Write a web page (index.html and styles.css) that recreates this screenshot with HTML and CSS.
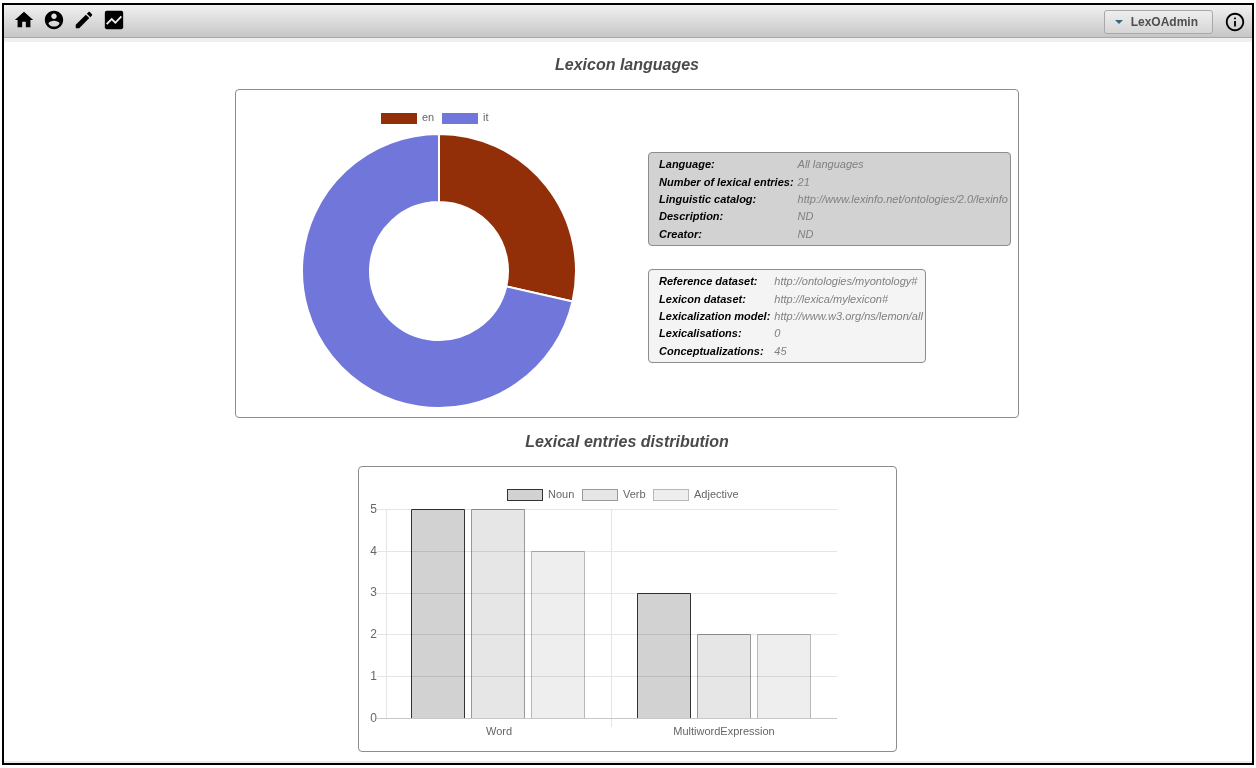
FILE: index.html
```html
<!DOCTYPE html>
<html lang="en">
<head>
<meta charset="utf-8">
<title>LexO statistics</title>
<link rel="stylesheet" href="styles.css">
</head>
<body>
<div class="frame">
  <header class="toolbar">
    <nav class="tools" aria-label="Main">
      <button class="tool" type="button" aria-label="Home"><svg viewBox="0 0 24 24"><path d="M10 20v-6h4v6h5v-8h3L12 3 2 12h3v8z"/></svg></button>
      <button class="tool" type="button" aria-label="Account"><svg viewBox="0 0 24 24"><path d="M12 2C6.480 2 2 6.480 2 12s4.480 10 10 10 10-4.480 10-10S17.520 2 12 2zm0 3c1.660 0 3 1.340 3 3s-1.340 3-3 3-3-1.340-3-3 1.340-3 3-3zm0 14.200c-2.500 0-4.710-1.280-6-3.220.030-1.990 4-3.080 6-3.080 1.990 0 5.970 1.090 6 3.080-1.290 1.940-3.500 3.220-6 3.220z"/></svg></button>
      <button class="tool" type="button" aria-label="Edit"><svg viewBox="0 0 24 24"><path d="M3 17.250V21h3.750L17.810 9.940l-3.750-3.750L3 17.250zM20.710 7.040c.390-.390.390-1.020 0-1.410l-2.340-2.340c-.390-.390-1.020-.390-1.410 0l-1.830 1.830 3.750 3.750 1.830-1.830z"/></svg></button>
      <button class="tool" type="button" aria-label="Statistics"><svg viewBox="0 0 24 24"><path d="M4 2h16a2 2 0 0 1 2 2v16a2 2 0 0 1-2 2H4a2 2 0 0 1-2-2V4a2 2 0 0 1 2-2z"/><path class="trend" d="M4 16.500l5.500-5.500 4 4L20 8"/></svg></button>
    </nav>
    <div class="account">
      <button class="user" type="button"><svg class="caret" viewBox="0 0 8 4"><path d="M0 0h8L4 4z"/></svg>LexOAdmin</button>
      <button class="tool" type="button" aria-label="Information"><svg viewBox="0 0 24 24"><path d="M11 7h2v2h-2zm0 4h2v6h-2zm1-9C6.480 2 2 6.480 2 12s4.480 10 10 10 10-4.480 10-10S17.520 2 12 2zm0 18c-4.410 0-8-3.590-8-8s3.590-8 8-8 8 3.590 8 8-3.590 8-8 8z"/></svg></button>
    </div>
  </header>
  <main class="content">
    <h2 class="title">Lexicon languages</h2>
    <section class="panel languages">
      <svg class="donut" width="412" height="327" viewBox="0 0 412 327" role="img" aria-label="Entries by language">
        <rect class="en" x="145" y="23" width="36" height="11"/>
        <text x="186" y="31">en</text>
        <rect class="it" x="206" y="23" width="36" height="11"/>
        <text x="247" y="31">it</text>
        <g class="slices">
          <path class="en" d="M203 44A137 137 0 0 1 336.560 211.480L270.270 196.360A69 69 0 0 0 203 112z"/>
          <path class="it" d="M336.560 211.480A137 137 0 1 1 203 44V112A69 69 0 1 0 270.270 196.360z"/>
        </g>
      </svg>
      <div class="details">
        <table class="info shaded">
          <tr><th scope="row">Language:</th><td>All languages</td></tr>
          <tr><th scope="row">Number of lexical entries:</th><td>21</td></tr>
          <tr><th scope="row">Linguistic catalog:</th><td>http://www.lexinfo.net/ontologies/2.0/lexinfo</td></tr>
          <tr><th scope="row">Description:</th><td>ND</td></tr>
          <tr><th scope="row">Creator:</th><td>ND</td></tr>
        </table>
        <table class="info">
          <tr><th scope="row">Reference dataset:</th><td>http://ontologies/myontology#</td></tr>
          <tr><th scope="row">Lexicon dataset:</th><td>http://lexica/mylexicon#</td></tr>
          <tr><th scope="row">Lexicalization model:</th><td>http://www.w3.org/ns/lemon/all</td></tr>
          <tr><th scope="row">Lexicalisations:</th><td>0</td></tr>
          <tr><th scope="row">Conceptualizations:</th><td>45</td></tr>
        </table>
      </div>
    </section>
    <h2 class="title">Lexical entries distribution</h2>
    <section class="panel">
      <svg class="bars" width="537" height="284" viewBox="0 0 537 284" role="img" aria-label="Lexical entries distribution">
        <rect class="noun" x="148.500" y="22.500" width="35" height="11"/>
        <text x="189" y="31">Noun</text>
        <rect class="verb" x="223.500" y="22.500" width="35" height="11"/>
        <text x="264" y="31">Verb</text>
        <rect class="adj" x="294.500" y="22.500" width="35" height="11"/>
        <text x="335" y="31">Adjective</text>
        <path class="grid" d="M18 42.500H478M18 84.500H478M18 126.500H478M18 167.500H478M18 209.500H478M27.500 43V251M252.500 43V260"/>
        <path class="axis" d="M18 251.500H478"/>
        <path class="noun" d="M52.500 251V42.500H105.500V251M278.500 251V126.500H331.500V251"/>
        <path class="verb" d="M112.500 251V42.500H165.500V251M338.500 251V167.500H391.500V251"/>
        <path class="adj" d="M172.500 251V84.500H225.500V251M398.500 251V167.500H451.500V251"/>
        <g class="scale">
          <text x="18" y="46">5</text>
          <text x="18" y="88">4</text>
          <text x="18" y="129">3</text>
          <text x="18" y="171">2</text>
          <text x="18" y="213">1</text>
          <text x="18" y="255">0</text>
        </g>
        <g class="names">
          <text x="140" y="268">Word</text>
          <text x="365" y="268">MultiwordExpression</text>
        </g>
      </svg>
    </section>
  </main>
</div>
</body>
</html>
```
FILE: styles.css
```css
* { box-sizing: border-box; }
body {
  margin: 0;
  padding: 3px 2px;
  min-height: 100vh;
  display: flex;
  background: #fff;
  font-family: "Liberation Sans", Arial, sans-serif;
}
.frame {
  flex: 1;
  border: 2px solid #000;
  box-shadow: inset 0 -2px #e8ebee;
}
.toolbar {
  display: flex;
  justify-content: space-between;
  align-items: center;
  height: 33px;
  padding: 0 6px 2px 9px;
  background: linear-gradient(#f1f1f1, #c6c6c6);
  border-bottom: 1px solid #a8a8a8;
  box-shadow: 0 4px #efefef;
}
.tools { display: flex; gap: 8px; }
.account { display: flex; align-items: center; gap: 11px; padding-top: 4px; }
.tool {
  width: 22px;
  height: 22px;
  padding: 0;
  border: 0;
  background: none;
}
.tool svg { display: block; width: 22px; height: 22px; }
.trend { fill: none; stroke: #eee; stroke-width: 2; }
.user {
  display: flex;
  align-items: center;
  gap: 8px;
  height: 24px;
  padding: 0 14px 0 10px;
  border: 1px solid #a8a8a8;
  border-radius: 3px;
  background: linear-gradient(#eee, #d6d6d6);
  color: #4f4f4f;
  font: bold 12px "Liberation Sans", Arial, sans-serif;
}
.caret { width: 8px; height: 4px; fill: #38667f; }
.content {
  display: flex;
  flex-direction: column;
  align-items: center;
  padding: 15px 2px 11px 0;
}
.title {
  margin: 0;
  color: #4a4a4a;
  font: italic bold 16px/24px "Liberation Sans", Arial, sans-serif;
}
.panel {
  margin: 12px 0;
  border: 1px solid #8c8c8c;
  border-radius: 4px;
}
.panel:last-child { margin-bottom: 0; }
.panel > svg { display: block; font-size: 11px; fill: #666; }
.languages { display: flex; align-items: center; padding-right: 7px; }
.details { display: flex; flex-direction: column; align-items: flex-start; gap: 23px; padding-top: 7px; }
.info {
  border: 1px solid #8c8c8c;
  border-radius: 4px;
  border-spacing: 0;
  height: 94px;
  padding: 3px 2px 2px 10px;
  background: #f4f4f4;
  font-size: 11px;
  font-style: italic;
  text-align: left;
}
.shaded { background: #d2d2d2; }
.info th { padding: 0 4px 0 0; color: #000; }
.info td { padding: 0; color: #808080; }
.en { fill: #922f08; }
.it { fill: #7176db; }
.donut text { fill: #666; }
.slices { stroke: #fff; stroke-width: 2; stroke-linejoin: bevel; }
.noun { fill: #d2d2d2; stroke: #333; }
.verb { fill: #e6e6e6; stroke: #999; }
.adj { fill: #eee; stroke: #b8b8b8; }
path.noun, path.verb, path.adj { mix-blend-mode: multiply; }
.grid { stroke: #e5e5e5; }
.axis { stroke: #c8c8c8; }
.scale { text-anchor: end; font-size: 12px; }
.names { text-anchor: middle; }
```
